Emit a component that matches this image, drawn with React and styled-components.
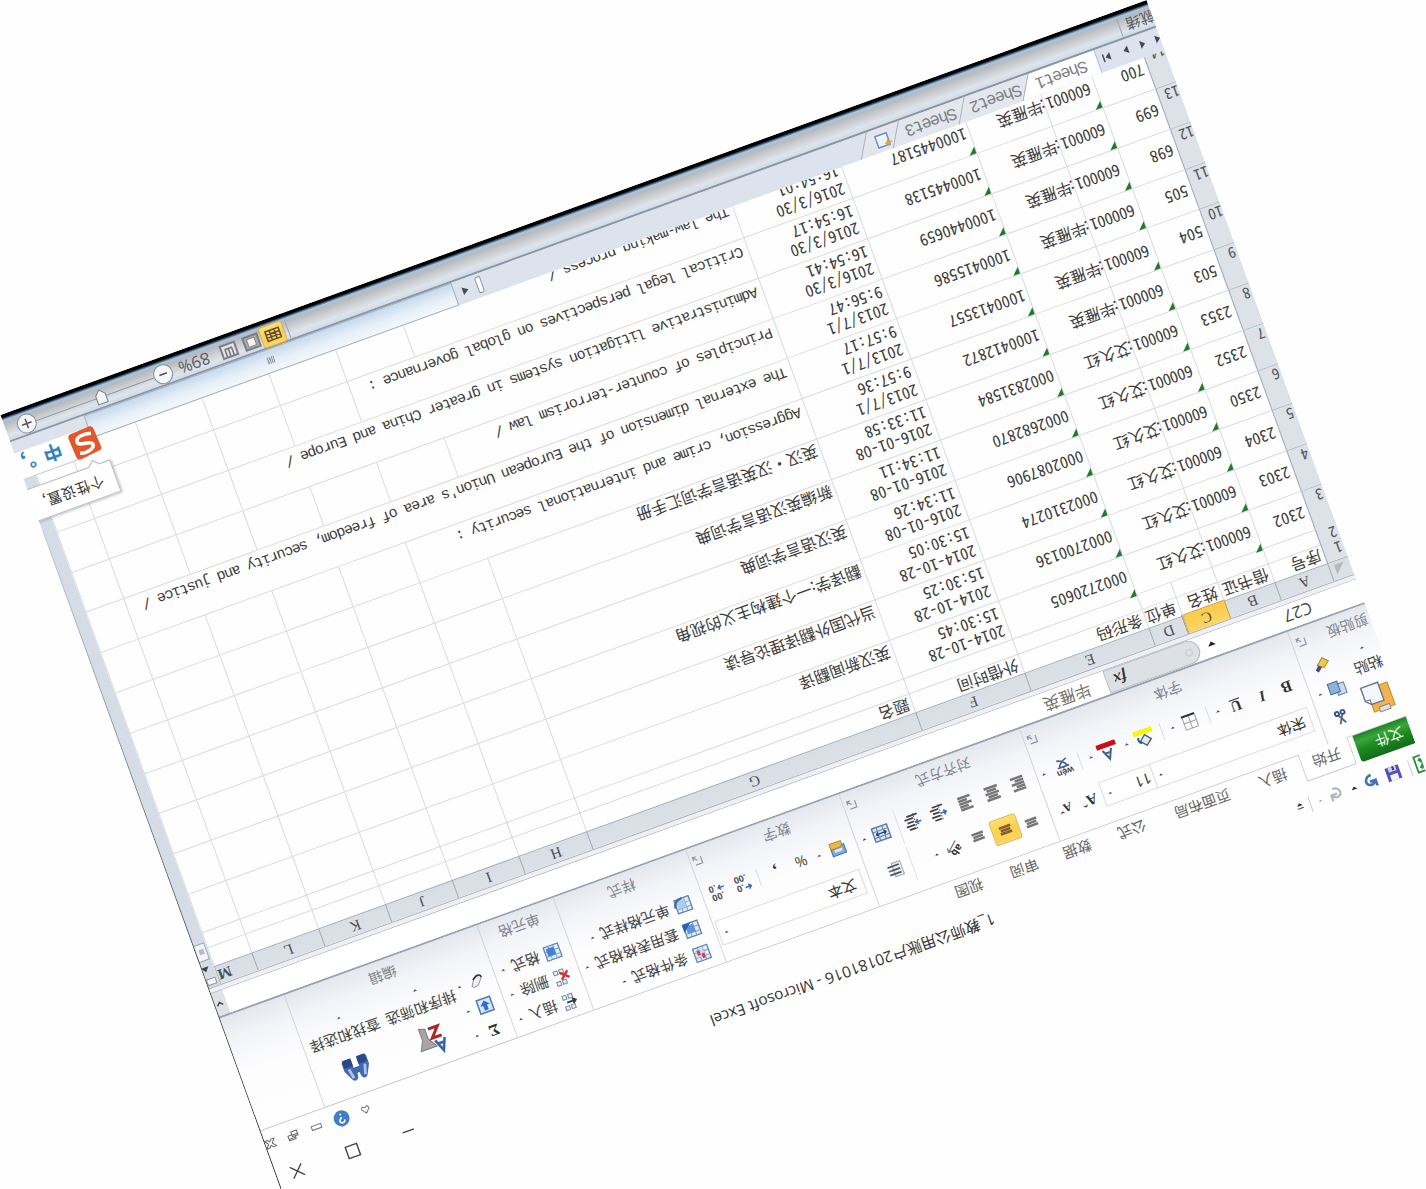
import React from "react";
import styled, { createGlobalStyle, css } from "styled-components";

const UI = `"Open Sans", "Noto Sans CJK SC", sans-serif`;
const CJK = `"Noto Sans CJK SC", "Liberation Sans", sans-serif`;
const MONO = `"Liberation Mono", "Noto Sans CJK SC", monospace`;

const Global = createGlobalStyle`
  * { box-sizing: border-box; }
  html, body { margin: 0; padding: 0; background: #fff; }
  body { overflow: hidden; }
`;

const Stage = styled.main`
  width: 1426px;
  height: 1189px;
  overflow: hidden;
  display: flex;
  align-items: center;
  justify-content: center;
  background: #fefefe;
`;

const Window = styled.div`
  position: relative;
  flex: none;
  width: 1219px;
  height: 823px;
  overflow: hidden;
  transform: rotate(160.1deg);
  display: flex;
  flex-direction: column;
  background: #fefefe;
  font-family: ${UI};
  font-size: 14.7px;
  color: #444;
  white-space: nowrap;
  &::after {
    content: "";
    position: absolute;
    top: 0;
    right: 0;
    width: 1px;
    height: 700px;
    background: linear-gradient(#333, #555 35%, #8a94a0 70%, #c5ccd6);
  }
`;

/* A strip lays its parts out from left to right by their centre lines. */
const StripBox = styled.div`
  display: flex;
  align-items: center;
  height: ${(p) => p.$h}px;
  flex: none;
`;
const Part = styled.div`
  flex: none;
  display: flex;
  align-items: center;
  justify-content: center;
  width: ${(p) => p.$w}px;
  margin-left: ${(p) => p.$ml}px;
`;
function Strip({ h, parts }) {
  let edge = 0;
  return (
    <StripBox $h={h}>
      {parts.map(([center, w, node], i) => {
        const left = center - w / 2;
        const ml = left - edge;
        edge = left + w;
        return (
          <Part key={i} $ml={ml} $w={w}>
            {node}
          </Part>
        );
      })}
    </StripBox>
  );
}

/* ---------- title ---------- */
const TitleBar = styled.header`
  height: 33px;
  flex: none;
  overflow: hidden;
`;
const Title = styled.span`
  font-size: 15.5px;
  line-height: 22px;
  color: #333;
`;
const Rule = styled.i`
  width: 1px;
  height: ${(p) => p.$h || 16}px;
  background: ${(p) => p.$c || "#c9ccd1"};
`;
const Caret = styled.i`
  border: ${(p) => p.$s || 2.6}px solid transparent;
  border-top-color: ${(p) => p.$c || "#555"};
  border-bottom: 0;
`;

/* ---------- tabs ---------- */
const TabRow = styled.nav`
  height: 29px;
  flex: none;
  display: flex;
  align-items: stretch;
  border-bottom: 1px solid #c3c7cc;
`;
const FileTab = styled.div`
  width: 57px;
  padding-left: 8px;
  line-height: 28px;
  color: #e9ffe9;
  font-size: 14.7px;
  border-radius: 0 3px 0 0;
  background: linear-gradient(#0f6d1c, #1d8a22 45%, #3ca53a 75%, #1c8424);
`;
const ActiveTab = styled.div`
  width: 53px;
  margin: 0 0 -1px 5px;
  text-align: center;
  line-height: 30px;
  color: #666;
  background: #fff;
  border: 1px solid #bfc4ca;
  border-bottom: 0;
  border-radius: 3px 3px 0 0;
`;
const TabName = styled.div`
  width: ${(p) => p.$w}px;
  text-align: center;
  line-height: 30px;
  color: #666;
`;
const TabTools = styled.div`
  margin-left: auto;
`;

/* ---------- ribbon ---------- */
const Ribbon = styled.section`
  height: 121px;
  flex: none;
  display: flex;
  background: linear-gradient(#fefefe 0%, #fdfdfe 50%, #f3f4f8 80%, #e4e7ee 100%);
  border-bottom: 2px solid #9aa2ac;
`;
const Group = styled.div`
  width: ${(p) => p.$w}px;
  flex: none;
  display: flex;
  flex-direction: column;
  border-right: 1px solid #d3d6dc;
`;
const GroupBody = styled.div`
  height: 91px;
  padding-top: ${(p) => p.$pt || 0}px;
  display: flex;
  flex-direction: ${(p) => (p.$row ? "row" : "column")};
`;
const GroupLabel = styled.span`
  color: #80868f;
  font-size: 14.4px;
  line-height: 28px;
`;
const Column = styled.div`
  width: ${(p) => p.$w}px;
  flex: none;
  display: flex;
  flex-direction: column;
  align-items: center;
  padding-top: ${(p) => p.$pt || 0}px;
`;
const Caption = styled.span`
  line-height: 20px;
  margin: ${(p) => p.$mt || 0}px 0 ${(p) => p.$mb || 8}px;
  font-size: 14.8px;
`;
const Combo = styled.div`
  width: ${(p) => p.$w}px;
  height: 26px;
  padding: 0 5px 2px ${(p) => p.$pl || 7}px;
  display: flex;
  align-items: center;
  justify-content: space-between;
  border: 1px solid #dadce0;
  background: #fff;
  color: #333;
`;
const Lit = styled.div`
  width: ${(p) => p.$w || 28}px;
  height: ${(p) => p.$h || 26}px;
  flex: none;
  display: flex;
  align-items: center;
  justify-content: center;
  border: 1.5px solid #d9b24c;
  border-radius: 3px;
  background: linear-gradient(#fbd561, #fcd050 50%, #fde169);
`;
const Glyph = styled.span`
  font-family: "Liberation Serif", serif;
  font-weight: bold;
  line-height: 1;
  font-size: ${(p) => p.$s || 16}px;
  font-style: ${(p) => (p.$italic ? "italic" : "normal")};
  text-decoration: ${(p) => (p.$under ? "underline" : "none")};
  color: ${(p) => p.$c || "#333"};
`;
const Label = styled.span`
  line-height: 24px;
  font-size: 14.7px;
`;

const Canvas = styled.svg`
  flex: none;
  overflow: visible;
`;
const Svg = ({ s = 18, w, h, children }) => (
  <Canvas width={w || s} height={h || s} viewBox={`0 0 ${w || s} ${h || s}`} fill="none">
    {children}
  </Canvas>
);
const Launcher = () => (
  <Svg s={10}>
    <path d="M1 8V1h7M5 5l4 4M9 5.500v3.500H5.500" stroke="#9097a0" strokeWidth="1.2" />
  </Svg>
);
const Lines = ({ rows }) => (
  <Svg s={16}>
    {rows.map(([y, x1, x2]) => (
      <path key={y} d={`M${x1} ${y}H${x2}`} stroke="#767676" strokeWidth="2.500" />
    ))}
  </Svg>
);
const Indent = ({ out }) => (
  <Svg s={18}>
    <path d="M8 2H15M8 5.500H17M8 9H15M8 12.500H17M3 15.500H14" stroke="#444" strokeWidth="1.800" />
    <path d={out ? "M7 7.500H2M4 5L1.500 7.500L4 10" : "M1 7.500H6M4 5L6.500 7.500L4 10"} stroke="#3a6fb0" strokeWidth="1.600" />
    <path d="M7 1V17" stroke="#555" strokeDasharray="1.500 1.500" />
  </Svg>
);
const Table = ({ accent, x }) => (
  <Svg s={18}>
    <rect x="2" y="2" width="15" height="14" fill="#e3edf8" stroke="#5f83b4" strokeWidth="1.300" />
    <path d="M2 6H17M2 11H17M7 2V16M12 2V16" stroke="#7f9fca" />
    <rect x="7" y="6" width="8" height="8" fill={accent} />
    {x}
  </Svg>
);
const SheetBits = ({ kind }) => (
  <Svg s={20}>
    <path d="M8 2h4v4h-4zM14 2h4v4h-4zM8 13h4v4h-4zM14 13h4v4h-4z" stroke="#6f87a6" fill="#eef3f9" />
    {kind === "add" ? (
      <path d="M6 9.500h9M9 7L6 9.500l3 2.500" stroke="#333c48" strokeWidth="2" />
    ) : (
      <path d="M4 7l8 7M12 7l-8 7" stroke="#d8322c" strokeWidth="2.400" />
    )}
  </Svg>
);

/* ---------- formula bar ---------- */
const FormulaBar = styled.div`
  height: 25px;
  flex: none;
  display: flex;
  background: #dfe3e8;
  border-bottom: 1px solid #b9bec6;
`;
const NameBox = styled.div`
  width: 171px;
  background: #fff;
  flex: none;
`;
const FxPill = styled.div`
  width: 99px;
  background: #fff;
  flex: none;
`;
const FxInner = styled.div`
  width: 100%;
  height: 24px;
  display: flex;
  align-items: center;
  justify-content: space-between;
  padding: 0 7px 0 6px;
  border: 1px solid #b6bcc5;
  border-radius: 13px 0 0 13px;
  background: #dde1e6;
`;
const Knob = styled.i`
  width: 8px;
  height: 8px;
  border-radius: 50%;
  background: radial-gradient(#e6e8ea 10%, #b6bbc3);
`;
const FormulaText = styled.div`
  flex: 1;
  padding-left: 17px;
  line-height: 22px;
  font-family: ${CJK};
  font-size: 16.500px;
  color: #78736a;
  background: #fff;
`;
const Expand = styled.div`
  width: 13px;
  display: flex;
  align-items: center;
  justify-content: center;
`;
const Gap = styled.div`
  height: 5px;
  flex: none;
  background: #eef0f3;
  border-bottom: 1px solid #a9b1bc;
`;

/* ---------- sheet ---------- */
const SheetArea = styled.div`
  height: 557px;
  flex: none;
  display: flex;
`;
const Sheet = styled.div`
  width: 1206px;
  height: 557px;
  overflow: hidden;
  flex: none;
`;
const cols = "22px 56px 54px 44px 36px 132px 116px 350px 72px 71px 71px 71px 71px 40px";
const HeadRow = styled.div`
  display: grid;
  grid-template-columns: ${cols};
  height: 19px;
  background: linear-gradient(#dde1e7, #d9dee5);
  border-bottom: 1px solid #a4aebb;
`;
const Head = styled.div`
  text-align: ${(p) => (p.$end ? "right" : "center")};
  font-family: "Liberation Serif", "Noto Sans CJK SC", serif;
  font-size: 15px;
  font-weight: ${(p) => (p.$end ? "bold" : "normal")};
  line-height: 19px;
  color: #4a4f57;
  border-right: 1px solid #a2abb8;
  ${(p) =>
    p.$on &&
    css`
      background: linear-gradient(#fbd567, #fccb45);
      box-shadow: 0 0 0 1px #cda043;
    `}
`;
const Corner = styled.div`
  display: flex;
  align-items: center;
  justify-content: center;
  border-right: 1px solid #a2abb8;
`;
const Row = styled.div`
  display: grid;
  grid-template-columns: ${cols};
  height: ${(p) => p.$h}px;
`;
const RowHead = styled.div`
  display: flex;
  align-items: flex-end;
  padding: 0 0 ${(p) => (p.$tight ? 0 : 1)}px ${(p) => (p.$long ? 0 : 2)}px;
  font-family: ${CJK};
  font-size: 15px;
  line-height: 16px;
  font-feature-settings: "hwid";
  color: #555;
  background: #dde1e8;
  border-right: 1px solid #a2abb8;
  border-bottom: 1px solid #b4bcc7;
`;
const cell = css`
  border-right: 1px solid ${(p) => (p.$open ? "transparent" : "#d9dbde")};
  border-bottom: 1px solid #d9dbde;
`;
const Num = styled.div`
  ${cell}
  display: flex;
  align-items: center;
  padding-left: ${(p) => p.$pl || 3}px;
  font-family: ${CJK};
  font-size: 16px;
  line-height: 18.500px;
  white-space: pre;
  font-feature-settings: "hwid";
  letter-spacing: ${(p) => p.$ls || 0}px;
  color: #3c3c3c;
  ${(p) =>
    p.$flag &&
    css`
      background: linear-gradient(135deg, #1f7a2a 4.500px, transparent 5.500px);
    `}
`;
const Book = styled.div`
  ${cell}
  grid-column: span ${(p) => p.$span || 1};
  display: flex;
  align-items: flex-end;
  padding: 0 0 1px ${(p) => (p.$latin ? 5 : 3)}px;
  font-family: ${(p) => (p.$latin ? MONO : CJK)};
  font-size: ${(p) => (p.$latin ? 15 : 16)}px;
  letter-spacing: ${(p) => (p.$latin ? -1.05 : 0)}px;
  line-height: ${(p) => (p.$latin ? 18 : 19)}px;
  color: #3c3c3c;
`;
const VScroll = styled.div`
  width: 13px;
  display: flex;
  flex-direction: column;
  align-items: center;
  background: #d5dce6;
`;
const SplitBox = styled.div`
  width: 10px;
  height: 7px;
  margin-top: 2px;
  border: 1px solid #8d96a2;
  background: #f4f6f8;
`;
const UpArrow = styled.i`
  margin: 7px 0 6px 5px;
  border: 4px solid transparent;
  border-bottom: 5px solid #444;
  border-top: 0;
`;
const Thumb = styled.div`
  width: 12px;
  height: 18px;
  border: 1px solid #99a2ae;
  background: #f3f5f8;
  display: flex;
  align-items: center;
  justify-content: center;
  &::before {
    content: "";
    width: 5px;
    height: 5px;
    background: #b4bbc4;
  }
`;

/* ---------- sheet tabs and status ---------- */
const SheetBar = styled.div`
  height: 24px;
  flex: none;
  display: flex;
  background: #dce3ec;
`;
const NavButtons = styled.div`
  width: 67px;
  flex: none;
  border-right: 1px solid #b8c0cc;
  padding-top: 2px;
  background: #dde2ee;
`;
const SheetTab = styled.div`
  width: ${(p) => p.$w}px;
  flex: none;
  margin-right: -14px;
  padding-left: ${(p) => p.$pl}px;
  line-height: 25px;
  font-family: "Liberation Mono", "Noto Sans CJK SC", monospace;
  font-size: 17px;
  letter-spacing: -1.300px;
  color: #7d8084;
  background: ${(p) => (p.$on ? "#fff" : "#e3e7ed")};
  clip-path: polygon(0 0, 100% 0, calc(100% - 14px) 100%, 0 100%);
  z-index: ${(p) => p.$z};
`;
const Slant = styled.i`
  width: 1px;
  flex: none;
  margin: 0 -8px 0 7px;
  background: #a3acb8;
  transform: skewX(-30.3deg);
  z-index: 9;
`;
const HScroll = styled.div`
  margin-left: auto;
  width: 500px;
  display: flex;
  align-items: center;
`;
const HThumb = styled.div`
  width: 391px;
  height: 24px;
  display: flex;
  align-items: center;
  justify-content: center;
  border: 1px solid #a5b0bf;
  background: linear-gradient(#f3f7fb, #e6eff8 45%, #c6d9ec);
  &::before {
    content: "";
    width: 8px;
    height: 7px;
    background: repeating-linear-gradient(90deg, #9aa4b0 0 1px, #c8d0da 1px 2px);
  }
`;
const Grip = styled.i`
  width: 6px;
  height: 17px;
  margin: 0 9px 0 2px;
  border: 1px solid #8b95a2;
  border-radius: 2px;
  background: #fff;
`;
const LeftArrow = styled.i`
  border: 4px solid transparent;
  border-right: 6px solid #454c58;
  border-left: 0;
  margin-right: 8px;
`;
const Status = styled.footer`
  height: 29px;
  flex: none;
  color: #555b63;
  border-top: 2px solid #8b96a4;
  background: linear-gradient(#cfdcea 0, #dfe4ea 5px, #cdd0d4 11px, #b6babf 18px, #a8c5de 21px, #27435e 23px, #000 24px);
`;
const Circle = styled.div`
  width: 20px;
  height: 20px;
  flex: none;
  border: 1.500px solid #868d96;
  border-radius: 50%;
  background: #f4f6f8;
  display: flex;
  align-items: center;
  justify-content: center;
`;
const Track = styled.div`
  width: 125px;
  height: 1px;
  background: #8d949d;
  display: flex;
  align-items: center;
  justify-content: center;
`;
const Percent = styled.span`
  font-size: 16.5px;
  line-height: 20px;
`;

/* ---------- input-method overlay ---------- */
const Ime = styled.div`
  position: absolute;
  left: 1131px;
  top: 710px;
  width: 90px;
`;
const Tip = styled.div`
  height: 34px;
  padding-left: 12px;
  line-height: 30px;
  font-family: ${CJK};
  font-size: 14.500px;
  letter-spacing: 0.400px;
  color: #333;
  background: #fff;
  border: 1px solid #b9bcc0;
  box-shadow: -1px -1px 3px rgba(0, 0, 0, 0.25);
`;
const TipNib = styled.i`
  display: block;
  width: 8px;
  height: 8px;
  margin: -4px 0 -4px 13px;
  transform: rotate(45deg);
  background: #fff;
  border: 1px solid #b9bcc0;
  border-width: 0 1px 1px 0;
`;
const ImeBar = styled.div`
  display: flex;
  align-items: center;
  height: 28px;
  margin: 10px 0 0 20px;
  padding-left: 22px;
  gap: 9px;
  background: #fff;
  border-top: 1px solid #c4c8ce;
  font-family: ${CJK};
  font-weight: bold;
  font-size: 19px;
  line-height: 26px;
  color: #2f83bd;
`;
const ImeLogo = styled.div`
  position: absolute;
  left: 1px;
  top: 41px;
  width: 34px;
  height: 34px;
`;

/* ---------- data ---------- */
const books = [
  ["2302", "艾久红", "0002720605", "2014-10-28\n15:30:45", "英汉新闻翻译"],
  ["2303", "艾久红", "0002700136", "2014-10-28\n15:30:25", "当代国外翻译理论导读"],
  ["2304", "艾久红", "0002310274", "2014-10-28\n15:30:05", "翻译学:一个建构主义的视角"],
  ["2350", "艾久红", "0002087906", "2016-01-08\n11:34:26", "英汉语言学词典"],
  ["2352", "艾久红", "0002682870", "2016-01-08\n11:34:11", "新编英汉语言学词典"],
  ["2353", "艾久红", "0002831584", "2016-01-08\n11:33:58", "英汉・汉英语言学词汇手册"],
  ["503", "毕雁英", "1000412872", "2013/7/1\n9:57:36", "Aggression, crime and international security :", 2],
  ["504", "毕雁英", "1000413557", "2013/7/1\n9:57:17", "The external dimension of the European Union's area of freedom, security and justice /", 6],
  ["505", "毕雁英", "1000415586", "2013/7/1\n9:56:47", "Principles of counter-terrorism law /", 1],
  ["698", "毕雁英", "1000440659", "2016/3/30\n16:54:41", "Administrative litigation systems in greater China and Europe /", 4],
  ["699", "毕雁英", "1000445138", "2016/3/30\n16:54:17", "Critical legal perspectives on global governance :", 2],
  ["700", "毕雁英", "1000445187", "2016/3/30\n16:54:01", "The law-making process /", 1],
];

const Blank = ({ n }) => Array.from({ length: n }, (_, i) => <Book key={i} />);

const WindowControls = [
  [1079, 12, <Svg s={12} key="n"><path d="M0 6H12" stroke="#444" strokeWidth="1.300" /></Svg>],
  [1137.5, 14, <Svg s={14} key="m"><rect x="1" y="1" width="12" height="12" stroke="#444" strokeWidth="1.400" /></Svg>],
  [1196.5, 16, <Svg s={16} key="c"><path d="M2 2l12 12M14 2L2 14" stroke="#444" strokeWidth="1.300" /></Svg>],
];

function TopBar() {
  return (
    <TitleBar>
      <Strip
        h={22}
        parts={[
          [4, 16, <Svg s={18} key="x"><path d="M-2 2h14v16h-14z" stroke="#2c8a3c" strokeWidth="1.800" fill="#fff" /><path d="M-1 5l9 10M8 5l-9 10" stroke="#2b9a3f" strokeWidth="3.500" /></Svg>],
          [13, 1, <Rule key="r" />],
          [31, 16, <Svg s={16} key="s"><path d="M1 2h14v14h-14z" fill="#5450b8" /><path d="M4 2h8v6h-8z" fill="#f1f3fb" /><path d="M4 11h8v5h-8z" fill="#cdd0ef" /><path d="M6 12h2v4h-2z" fill="#37349b" /></Svg>],
          [55, 16, <Svg s={16} key="u"><path d="M3 3v6h6M4 8c4-5 11-1 8 4c-1 2-3 3-6 3" stroke="#3f73b8" strokeWidth="2.600" /></Svg>],
          [73, 8, <Caret key="d1" $s={3} $c="#333" />],
          [91.5, 16, <Svg s={16} key="re"><path d="M13 3v6H7M12 8C8 3 1 7 4 12c1 2 3 3 6 3" stroke="#b3b7bd" strokeWidth="2.200" /></Svg>],
          [109, 8, <Caret key="d2" $c="#aaa" />],
          [119, 1, <Rule key="r2" />],
          [130, 8, <Svg s={8} key="cu"><path d="M1 3.500h6" stroke="#333" /><path d="M1 6h6L4 9z" fill="#333" /></Svg>],
          [606.5, 320, <Title key="t">1_教师公用账户20181016 - Microsoft Excel</Title>],
          ...WindowControls,
        ]}
      />
    </TitleBar>
  );
}

function Tabs() {
  return (
    <TabRow>
      <FileTab>文件</FileTab>
      <ActiveTab>开始</ActiveTab>
      <TabName $w={62}>插入</TabName>
      <TabName $w={88}>页面布局</TabName>
      <TabName $w={62}>公式</TabName>
      <TabName $w={54}>数据</TabName>
      <TabName $w={59}>审阅</TabName>
      <TabName $w={58}>视图</TabName>
      <TabTools>
        <Strip
          h={25}
          parts={[
            [5, 10, <Svg s={10} key="a"><path d="M5 1L9 5.500L7.500 8L5 6.500L2.500 8L1 5.500Z" stroke="#777" /></Svg>],
            [30, 17, <Svg s={17} key="h"><circle cx="8.500" cy="8.500" r="8" fill="#3f7fc6" /><path d="M6 6.500c0-3.500 5.500-3.200 5 0c-.3 1.800-2.500 1.800-2.500 3.500M8.500 11.800v1.700" stroke="#fff" strokeWidth="1.600" /></Svg>],
            [57, 12, <Svg s={12} key="i"><rect x="1" y="4" width="10" height="4" stroke="#777" /></Svg>],
            [82, 12, <Svg s={12} key="r"><path d="M1 5h6v5h-6zM4 5V2h7v5H7M1 6.500h6M4 3.500h7" stroke="#666" /></Svg>],
            [106, 12, <Svg s={12} key="x"><path d="M1 2h3l2 2l2-2h3l-3 4l3 4h-3l-2-2l-2 2h-3l3-4z" stroke="#666" /></Svg>],
            [112, 0, null],
          ]}
        />
      </TabTools>
    </TabRow>
  );
}

function RibbonPanel() {
  const dd = <Caret />;
  const sep = <Rule $h={18} $c="#dadce1" />;
  return (
    <Ribbon>
      <Group $w={83}>
        <GroupBody $row>
          <Column $w={35} $pt={11}>
            <Svg w={30} h={32}>
              <path d="M3 3h22v24h-22z" fill="#f0b44e" stroke="#c68a2c" />
              <path d="M8 1h11v5h-11z" fill="#e2e2dc" stroke="#8a8a80" />
              <path d="M12 11h13l5 5v14h-18z" fill="#f3f6fb" stroke="#6b7688" strokeWidth="1.400" />
              <path d="M25 11v5h5" stroke="#6b7688" />
            </Svg>
            <Caption $mt={7}>粘贴</Caption>
            <Caret />
          </Column>
          <Column $w={40} $pt={7}>
            <Strip h={28} parts={[[20, 16, <Svg s={16} key="c"><path d="M5 1l5 9M11 1l-5 9" stroke="#55657f" strokeWidth="1.800" /><circle cx="5" cy="12" r="2" stroke="#2e4f8f" strokeWidth="1.800" /><circle cx="11" cy="12" r="2" stroke="#2e4f8f" strokeWidth="1.800" /></Svg>]]} />
            <Strip h={28} parts={[[20, 18, <Svg s={18} key="p"><path d="M1 2h9v11h-9z" fill="#c7dcf3" stroke="#5a7fae" /><path d="M7 5h10v11h-10z" fill="#8fb2dc" stroke="#44699c" /></Svg>], [38, 6, dd]]} />
            <Strip h={28} parts={[[20, 16, <Svg s={16} key="f"><path d="M1 9l6-5l6 4l-7 6z" fill="#eecb4b" stroke="#a3872c" /><path d="M9 5l5-4l2 3l-4 4z" fill="#4a4f74" /></Svg>]]} />
          </Column>
        </GroupBody>
        <Strip h={28} parts={[[24, 46, <GroupLabel key="l">剪贴板</GroupLabel>], [73, 10, <Launcher key="k" />]]} />
      </Group>

      <Group $w={285}>
        <GroupBody $pt={9}>
          <Strip
            h={39}
            parts={[
              [90.5, 168, <Combo key="a" $w={168} $pl={6}>宋体{dd}</Combo>],
              [201, 55, <Combo key="b" $w={55} $pl={3}>11{dd}</Combo>],
              [243, 20, <Glyph key="A" $s={15}>Aˆ</Glyph>],
              [268, 16, <Glyph key="a2" $s={12}>Aˇ</Glyph>],
            ]}
          />
          <Strip
            h={39}
            parts={[
              [19, 14, <Glyph key="B">B</Glyph>],
              [45, 12, <Glyph key="I" $italic $s={15}>I</Glyph>],
              [73, 14, <Glyph key="U" $under $s={15}>U</Glyph>],
              [92, 6, dd],
              [102, 1, sep],
              [121.5, 16, <Svg s={16} key="g"><path d="M1 1h13v13M1 1v13M7.500 1v13M1 7.500h13" stroke="#a0a0a0" /><path d="M1 14.500h14" stroke="#333" strokeWidth="2" /></Svg>],
              [140, 6, dd],
              [151, 1, sep],
              [170, 22, <Svg w={22} h={22} key="y"><path d="M5 8l6-5l5 6l-6 5z" stroke="#55606e" fill="#dfe8f3" strokeWidth="1.400" /><path d="M15 7c3 1 3 4 2 6" stroke="#2e5f9e" strokeWidth="2" /><path d="M1 15h20v5h-20z" fill="#f6f60c" /></Svg>],
              [189, 6, dd],
              [209, 22, <Svg w={22} h={22} key="r"><path d="M7 13l4.500-10l4.500 10M9 9.500h5" stroke="#42618f" strokeWidth="2" /><path d="M1 15h20v5h-20z" fill="#c80f12" /></Svg>],
              [227, 6, dd],
              [238, 1, sep],
              [256, 20, <Svg w={18} h={18} key="w"><text x="0" y="7" fontFamily="Liberation Sans" fontSize="9" fontWeight="bold" fill="#444">wén</text><path d="M3 9.500h12M9 7.500v2M5 10c2 4 5 6 9 7M13 10c-2 4-5 6-9 7" stroke="#44659c" strokeWidth="1.700" /></Svg>],
              [277, 6, dd],
            ]}
          />
        </GroupBody>
        <Strip h={28} parts={[[132, 40, <GroupLabel key="l">字体</GroupLabel>], [276, 10, <Launcher key="k" />]]} />
      </Group>

      <Group $w={192}>
        <GroupBody $pt={9}>
          <Strip
            h={39}
            parts={[
              [19.500, 16, <Lines key="1" rows={[[3, 2, 14], [6, 3, 13], [9, 2, 14]]} />],
              [47, 28, <Lit key="2"><Svg s={14}><path d="M1 4H13M2 7H12M1 10H13" stroke="#8a5a34" strokeWidth="2.600" /></Svg></Lit>],
              [74.500, 16, <Lines key="3" rows={[[8, 2, 14], [11, 3, 13], [14, 2, 14]]} />],
              [103, 16, <Svg s={16} key="4"><path d="M3 15L13 6M13 10V6h-4" stroke="#777" strokeWidth="1.300" /><text x="0" y="9" fontSize="10" fontWeight="bold" fill="#333" transform="rotate(-35 5 8)">ab</text></Svg>],
              [120, 6, dd],
              [146, 1, <Rule key="5" $h={36} $c="#dfe1e5" />],
              [164, 18, <Svg s={18} key="6"><path d="M2 2h9v14h-9z" fill="#e9edf3" stroke="#a2a8b2" /><path d="M4 5h12M4 9h9M4 13h12" stroke="#555" strokeWidth="1.800" /><path d="M12 9h4" stroke="#3f86c9" strokeWidth="2" /></Svg>],
            ]}
          />
          <Strip
            h={39}
            parts={[
              [20, 16, <Lines key="1" rows={[[2, 1, 14], [5, 1, 10], [8, 1, 14], [11, 1, 10], [14, 1, 14]]} />],
              [47, 16, <Lines key="2" rows={[[2, 1, 15], [5, 3, 13], [8, 1, 15], [11, 3, 13], [14, 1, 15]]} />],
              [74.500, 16, <Lines key="3" rows={[[2, 2, 15], [5, 6, 15], [8, 2, 15], [11, 6, 15], [14, 2, 15]]} />],
              [104, 18, <Indent key="4" out />],
              [131, 18, <Indent key="5" />],
              [146, 1, <Rule key="r" $h={36} $c="#dfe1e5" />],
              [165, 18, <Svg s={18} key="6"><path d="M1 2h16v14h-16z" fill="#dbe6f4" stroke="#5f7ba5" strokeWidth="1.400" /><path d="M1 6h16M1 12h16M6 2v4M12 2v4M6 12v4M12 12v4" stroke="#5f7ba5" /><path d="M4 9h10M6 7L4 9l2 2M12 7l2 2l-2 2" stroke="#2b4270" strokeWidth="1.400" /></Svg>],
              [182.500, 6, dd],
            ]}
          />
        </GroupBody>
        <Strip h={28} parts={[[86, 70, <GroupLabel key="l">对齐方式</GroupLabel>], [183, 10, <Launcher key="k" />]]} />
      </Group>

      <Group $w={163}>
        <GroupBody $pt={9}>
          <Strip h={39} parts={[[83, 154, <Combo key="a" $w={154}>文本{dd}</Combo>]]} />
          <Strip
            h={39}
            parts={[
              [19, 20, <Svg s={20} key="m"><path d="M3 4h14v9h-14z" fill="#7fa9dc" stroke="#3f6ca8" /><path d="M6 7h8v3h-8z" fill="#d9e7f6" /><path d="M8 11h9v6h-12v-4z" fill="#e9b84d" stroke="#b5852b" /></Svg>],
              [39, 6, dd],
              [58, 16, <Label key="p">%</Label>],
              [85, 8, <Glyph key="c" $s={17}>,</Glyph>],
              [103, 1, sep],
              [122, 22, <Svg s={20} key="i"><path d="M1 5h6M3.500 2.500L1 5l2.500 2.500" stroke="#3c6cab" strokeWidth="1.500" /><text x="8" y="9" fontSize="9" fontWeight="bold" fill="#555">.0</text><text x="3" y="18" fontSize="9" fontWeight="bold" fill="#555">.00</text></Svg>],
              [148, 22, <Svg s={20} key="d"><text x="3" y="9" fontSize="9" fontWeight="bold" fill="#555">.00</text><path d="M1 14h6M4.500 11.500L7 14l-2.500 2.500" stroke="#3c6cab" strokeWidth="1.500" /><text x="9" y="18" fontSize="9" fontWeight="bold" fill="#555">.0</text></Svg>],
            ]}
          />
        </GroupBody>
        <Strip h={28} parts={[[71, 40, <GroupLabel key="l">数字</GroupLabel>], [155, 10, <Launcher key="k" />]]} />
      </Group>

      <Group $w={141}>
        <GroupBody $pt={3}>
          <Strip h={26} parts={[[19, 18, <Table key="t" accent="#c8d8ee" x={<path d="M7 4h3v5h-3zM11 8h3v5h-3z" fill="#d0435a" />} />], [64, 60, <Label key="l">条件格式</Label>], [102, 6, dd]]} />
          <Strip h={26} parts={[[20, 18, <Table key="t" accent="#5f93d8" x={<path d="M9 16l9-8v8z" fill="#2b62b4" />} />], [79, 90, <Label key="l">套用表格格式</Label>], [132, 6, dd]]} />
          <Strip h={26} parts={[[20, 18, <Table key="t" accent="#a7cdf0" x={<path d="M9 16c5 0 9-3 9-8" stroke="#456f9f" strokeWidth="2.400" />} />], [72, 76, <Label key="l">单元格样式</Label>], [117, 6, dd]]} />
        </GroupBody>
        <Strip h={28} parts={[[73, 40, <GroupLabel key="l">样式</GroupLabel>]]} />
      </Group>

      <Group $w={81}>
        <GroupBody $pt={3}>
          <Strip h={26} parts={[[17, 20, <SheetBits key="t" kind="add" />], [47, 32, <Label key="l">插入</Label>], [71, 6, dd]]} />
          <Strip h={26} parts={[[17, 20, <SheetBits key="t" />], [47, 32, <Label key="l">删除</Label>], [71, 6, dd]]} />
          <Strip h={26} parts={[[18, 18, <Table key="t" accent="#3f82d6" />], [47, 32, <Label key="l">格式</Label>], [71, 6, dd]]} />
        </GroupBody>
        <Strip h={28} parts={[[41, 50, <GroupLabel key="l">单元格</GroupLabel>]]} />
      </Group>

      <Group $w={205}>
        <GroupBody $row>
          <Column $w={42} $pt={2}>
            <Strip h={26} parts={[[17, 14, <Glyph key="s" $s={16}>Σ</Glyph>], [35, 6, dd]]} />
            <Strip h={26} parts={[[17, 16, <Svg s={16} key="f"><path d="M1 1h14v14h-14z" fill="#dce8f8" stroke="#4f79b8" strokeWidth="1.500" /><path d="M6 3h4v5h3l-5 5l-5-5h3z" fill="#2c6fd1" /></Svg>], [35, 6, dd]]} />
            <Strip h={26} parts={[[17, 16, <Svg s={16} key="e"><path d="M2 10l5-6q4-3 7 0l-5 8h-6z" fill="#eef2f7" stroke="#8b96a4" /><path d="M2 10q0 3 4 3l5-3" stroke="#333" strokeWidth="1.600" /></Svg>], [35, 6, dd]]} />
          </Column>
          <Column $w={76} $pt={10}>
            <Svg w={32} h={32}>
              <path d="M14 9h17l-5 10v12l-6-2v-10z" fill="#a6a6a6" stroke="#808080" />
              <path d="M4 15l5-12l5 12M6 11h6" stroke="#3b62ad" strokeWidth="2.600" />
              <path d="M6 18h10l-9 10h10" stroke="#a8282a" strokeWidth="3" />
            </Svg>
            <Caption $mt={8}>排序和筛选</Caption>
            <Caret />
          </Column>
          <Column $w={86} $pt={10}>
            <Svg w={32} h={32}>
              <path d="M8 6q3-4 6 0l1 5h2l1-5q3-4 6 0l5 10v9q-5 4-10 0v-8h-6v8q-5 4-10 0v-9z" fill="#4468ab" />
              <path d="M4 19h9v8h-9zM19 19h9v8h-9z" fill="#2a4787" />
              <path d="M10 7l-3 10M22 7l2 10" stroke="#a9c3ea" strokeWidth="2.800" />
            </Svg>
            <Caption $mt={8}>查找和选择</Caption>
            <Caret />
          </Column>
        </GroupBody>
        <Strip h={28} parts={[[105, 40, <GroupLabel key="l">编辑</GroupLabel>]]} />
      </Group>
    </Ribbon>
  );
}

function Formula() {
  return (
    <FormulaBar>
      <NameBox>
        <Strip h={25} parts={[[66, 40, <Percent key="n">C27</Percent>], [158, 10, <Caret key="c" $s={4} $c="#222" />]]} />
      </NameBox>
      <FxPill>
        <FxInner>
          <Knob />
          <Glyph $s={16} $italic>fx</Glyph>
        </FxInner>
      </FxPill>
      <FormulaText>毕雁英</FormulaText>
      <Expand>
        <Svg s={8}><path d="M1 2l3 3l3-3" stroke="#444" strokeWidth="1.500" /></Svg>
      </Expand>
    </FormulaBar>
  );
}

function Grid() {
  return (
    <SheetArea>
      <Sheet>
        <HeadRow>
          <Corner>
            <Svg s={12}><path d="M11 1v10H1z" fill="#b4bac3" /></Svg>
          </Corner>
          {"ABCDEFGHIJKLM".split("").map((c) => (
            <Head key={c} $on={c === "C"} $end={c === "M"}>{c}</Head>
          ))}
        </HeadRow>
        <Row $h={18.500}>
          <RowHead $tight>1</RowHead>
          {["序号", "借书证", "姓名", "单位", "条形码", "外借时间", "题名"].map((t) => (
            <Num key={t}>{t}</Num>
          ))}
          <Blank n={6} />
        </Row>
        <Row $h={15.700}>
          <RowHead $tight>2</RowHead>
          <Blank n={13} />
        </Row>
        {books.map(([no, name, code, time, title, span], i) => (
          <Row key={code} $h={42.800}>
            <RowHead $long={i > 6}>{i + 3}</RowHead>
            <Num $pl={4}>{no}</Num>
            <Num $flag $pl={5} $ls={-0.3}>600001:</Num>
            <Num $open $pl={2}>{name}</Num>
            <Num />
            <Num $flag>{code}</Num>
            <Num $pl={4}>{time}</Num>
            <Book $latin={!!span} $span={span || 1}>{title}</Book>
            <Blank n={7 - (span || 1)} />
          </Row>
        ))}
      </Sheet>
      <VScroll>
        <SplitBox />
        <UpArrow />
        <Thumb />
      </VScroll>
    </SheetArea>
  );
}

function Bottom() {
  return (
    <>
      <SheetBar>
        <NavButtons>
          <Strip
            h={22}
            parts={[
              [2, 8, <Svg s={8} key="1"><path d="M1 0v8" stroke="#444b58" strokeWidth="1.500" /><path d="M7 0v8L2 4z" fill="#444b58" /></Svg>],
              [19, 8, <Svg s={8} key="2"><path d="M6 0v8L1 4z" fill="#444b58" /></Svg>],
              [36, 8, <Svg s={8} key="3"><path d="M2 0v8l5-4z" fill="#444b58" /></Svg>],
              [56, 9, <Svg s={9} key="4"><path d="M1 0v8l5-4z" fill="#444b58" /><path d="M8 0v8" stroke="#444b58" strokeWidth="1.500" /></Svg>],
            ]}
          />
        </NavButtons>
        <SheetTab $w={83} $pl={11} $on $z={4}>Sheet1</SheetTab>
        <Slant />
        <SheetTab $w={82} $pl={12} $z={3}>Sheet2</SheetTab>
        <Slant />
        <SheetTab $w={84} $pl={13} $z={2}>Sheet3</SheetTab>
        <Slant />
        <SheetTab $w={48} $pl={12} $z={1}>
          <Svg s={20}>
            <path d="M4 5h12v12h-12z" fill="#eef4fc" stroke="#6f8fc0" strokeWidth="1.500" />
            <path d="M5 3l1.500 3l3 1l-3 1.500l-1.500 3l-1.500-3l-3-1.500l3-1z" fill="#e0a03a" />
          </Svg>
        </SheetTab>
        <Slant />
        <HScroll>
          <Grip />
          <LeftArrow />
          <HThumb />
        </HScroll>
      </SheetBar>
      <Status>
        <Strip
          h={19}
          parts={[
            [13, 30, <Label key="l">就绪</Label>],
            [34, 1, <Rule key="r" $h={18} $c="#9da3aa" />],
            [919, 1, <Rule key="r1" $h={20} $c="#9da3aa" />],
            [935, 24, <Lit key="n" $w={25} $h={22}><Svg w={16} h={12}><path d="M1 1h14v10h-14zM1 4.300h14M1 7.600h14M5.500 1v10M10.500 1v10" stroke="#5d5135" strokeWidth="1.500" /></Svg></Lit>],
            [958, 18, <Svg w={18} h={16} key="p"><path d="M1.500 1.500h15v13h-15z" stroke="#7a7f86" strokeWidth="2" fill="#aaa" /><path d="M5 4h8v8h-8z" fill="#f4f4f4" stroke="#888" /></Svg>],
            [981.500, 18, <Svg w={18} h={16} key="b"><path d="M1.500 1.500h15v13h-15z" stroke="#7a7f86" strokeWidth="2" fill="#e3e4e6" /><path d="M5.500 2v8M9 2v8M12.500 2v8M5 10h8" stroke="#777" strokeWidth="1.600" /></Svg>],
            [1019, 32, <Percent key="z">89%</Percent>],
            [1052, 20, <Circle key="m"><Svg s={10}><path d="M1 5h8" stroke="#555" strokeWidth="1.500" /></Svg></Circle>],
            [1124.500, 125, <Track key="t"><Part $w={12} $ml={-14}><Svg w={12} h={16}><path d="M1 1h10v9l-5 5l-5-5z" fill="#f4f5f7" stroke="#777d86" /></Svg></Part></Track>],
            [1197, 20, <Circle key="pl"><Svg s={10}><path d="M0 5h10M5 0v10" stroke="#555" strokeWidth="1.500" /></Svg></Circle>],
          ]}
        />
      </Status>
    </>
  );
}

function InputMethod() {
  return (
    <Ime>
      <Tip>个性设置,</Tip>
      <TipNib />
      <ImeBar>
        <span>中</span>
        <span>°,</span>
      </ImeBar>
      <ImeLogo>
        <Svg s={34}>
          <path d="M5 5L26 3Q30 3 30 7L31 26Q31 30 27 30L7 31Q4 31 4 27L3 8Q3 5 5 5Z" fill="#e4572a" />
          <path d="M25 9C18 6 9 9 10 13.500C11 18 24 15 24 20.500C24 26 14 26 8 24" stroke="#fff" strokeWidth="3.600" />
        </Svg>
      </ImeLogo>
    </Ime>
  );
}

export default function App() {
  return (
    <>
      <Global />
      <Stage>
        <Window>
          <TopBar />
          <Tabs />
          <RibbonPanel />
          <Formula />
          <Gap />
          <Grid />
          <Bottom />
          <InputMethod />
        </Window>
      </Stage>
    </>
  );
}
